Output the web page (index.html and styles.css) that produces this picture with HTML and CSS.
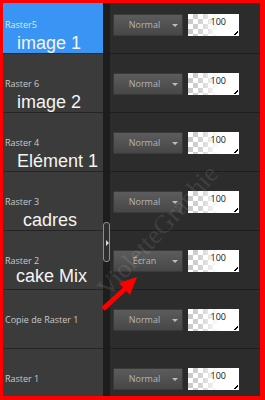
FILE: index.html
```html
<!DOCTYPE html>
<html>
<head>
<meta charset="utf-8">
<link rel="stylesheet" href="styles.css">
</head>
<body>
<div class="frame">
  <div class="layers">
    <div class="row selected">
      <div class="name"><div class="raster">Raster5</div><div class="big">image 1</div></div>
      <div class="ctrl"><div class="blend"><span class="mode">Normal</span><i class="caret"></i></div><div class="opacity">100</div></div>
    </div>
    <div class="row">
      <div class="name"><div class="raster">Raster 6</div><div class="big">image 2</div></div>
      <div class="ctrl"><div class="blend"><span class="mode">Normal</span><i class="caret"></i></div><div class="opacity">100</div></div>
    </div>
    <div class="row">
      <div class="name"><div class="raster">Raster 4</div><div class="big">Elément 1</div></div>
      <div class="ctrl"><div class="blend"><span class="mode">Normal</span><i class="caret"></i></div><div class="opacity">100</div></div>
    </div>
    <div class="row">
      <div class="name"><div class="raster">Raster 3</div><div class="big big-cadres">cadres</div></div>
      <div class="ctrl"><div class="blend"><span class="mode">Normal</span><i class="caret"></i></div><div class="opacity">100</div></div>
    </div>
    <div class="row">
      <div class="name"><div class="raster">Raster 2</div><div class="big big-mix">cake Mix</div></div>
      <div class="ctrl"><div class="blend"><span class="mode">Écran</span><i class="caret"></i></div><div class="opacity">100</div></div>
    </div>
    <div class="row">
      <div class="name"><div class="raster">Copie de Raster 1</div></div>
      <div class="ctrl"><div class="blend"><span class="mode">Normal</span><i class="caret"></i></div><div class="opacity">100</div></div>
    </div>
    <div class="row">
      <div class="name"><div class="raster">Raster 1</div></div>
      <div class="ctrl"><div class="blend"><span class="mode">Normal</span><i class="caret"></i></div><div class="opacity">100</div></div>
    </div>
  </div>
  <div class="thumb"><i class="thumb-arrow"></i></div>
  <div class="watermark">VioletteGraphie</div>
  <svg class="arrow" width="50" height="45" viewBox="0 0 50 45">
    <line x1="3" y1="41" x2="26" y2="20" stroke="#ff0000" stroke-width="5"/>
    <polygon points="37,9 19,15 30,27" fill="#ff0000"/>
  </svg>
</div>
</body>
</html>
```
FILE: styles.css
```css
* { box-sizing: border-box; }
html, body { margin: 0; padding: 0; background: #ff0000; }
.frame {
  position: relative;
  width: 265px;
  height: 400px;
  border: 3px solid #ff0000;
  border-right-width: 5px;
  border-bottom-width: 4px;
  overflow: hidden;
  background: #1d1d1d;
  font-family: "Open Sans", "Noto Sans", sans-serif;
}
.layers { margin-top: -8px; }
.row {
  display: flex;
  gap: 7px;
  background: #1d1d1d;
}
.name {
  width: 100px;
  height: 59px;
  flex: none;
  background: #3b3b3b;
  border-bottom: 1px solid #242424;
  padding: 24px 0 0 2px;
}
.selected .name { background: #3a94f4; border-bottom-color: #2a2a2a; }
.raster {
  font-size: 9px;
  line-height: 12px;
  color: #c9c9c9;
  white-space: nowrap;
}
.selected .raster { color: #d8e8fb; }
.big {
  margin-top: 2px;
  padding-left: 12px;
  font-family: "Liberation Sans", Arial, sans-serif;
  font-size: 18px;
  line-height: 20px;
  color: #f4f4f4;
  white-space: nowrap;
}
.big-cadres { padding-left: 18px; }
.big-mix { margin-top: -1px; padding-left: 11px; }
.ctrl {
  flex: 1;
  height: 59px;
  background: #2c2c2c;
  border-bottom: 1px solid #1e1e1e;
  padding: 19px 0 0 3px;
  display: flex;
  align-items: flex-start;
  gap: 5px;
}
.blend {
  width: 70px;
  height: 22px;
  display: flex;
  align-items: center;
  background: linear-gradient(#5c5c5c, #474747);
  border: 1px solid #3a3a3a;
  border-radius: 1px;
  padding: 0 4px 0 6px;
}
.mode {
  flex: 1;
  text-align: center;
  font-size: 9px;
  color: #b4b4b4;
  line-height: 12px;
}
.caret {
  width: 0;
  height: 0;
  border-left: 3px solid transparent;
  border-right: 3px solid transparent;
  border-top: 3px solid #bdbdbd;
  margin-left: 3px;
}
.opacity {
  position: relative;
  width: 51px;
  height: 22px;
  padding: 2px 13px 0 0;
  text-align: right;
  font-size: 9px;
  line-height: 12px;
  color: #111;
  background:
    linear-gradient(90deg, rgba(255,255,255,0) 0%, rgba(255,255,255,0.2) 25%, #fff 60%),
    repeating-conic-gradient(#c8c8c8 0 25%, #ffffff 0 50%) 0 0 / 10px 10px;
}
.opacity::after {
  content: "";
  position: absolute;
  right: 1px;
  bottom: 1px;
  width: 4px;
  height: 4px;
  background: linear-gradient(135deg, transparent 45%, #000 45%, #000 65%, transparent 65%);
}
.thumb {
  position: absolute;
  left: 100px;
  top: 219px;
  width: 7px;
  height: 40px;
  border: 1px solid #8f8f8f;
  border-radius: 3px;
  background: #2f2f2f;
}
.thumb-arrow {
  position: absolute;
  left: 2px;
  top: 17px;
  width: 0;
  height: 0;
  border-top: 3px solid transparent;
  border-bottom: 3px solid transparent;
  border-left: 3px solid #dcdcdc;
}
.watermark {
  position: absolute;
  left: 60px;
  top: 214px;
  width: 190px;
  text-align: center;
  transform: rotate(-48deg);
  font-family: "Liberation Serif", serif;
  font-size: 26px;
  line-height: 28px;
  color: rgba(255,255,255,0.11);
  white-space: nowrap;
  pointer-events: none;
}
.arrow {
  position: absolute;
  left: 97px;
  top: 265px;
}
```
